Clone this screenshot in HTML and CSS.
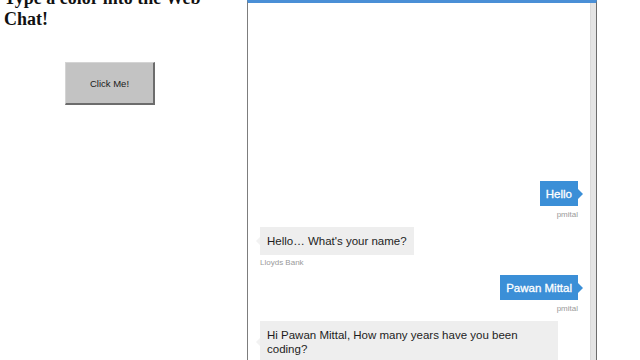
FILE: index.html
```html
<!DOCTYPE html>
<html lang="en">
<head>
    <meta charset="UTF-8">
    <meta name="viewport" content="width=device-width, initial-scale=1.0">
    <title>Web Chat Colors</title>
    <link rel="stylesheet" href="styles.css">
</head>
<body>
    <div id="wrapper">
        <div class="side">
            <h3 class="title">Type a color into the Web Chat!</h3>
            <button class="click-btn">Click Me!</button>
        </div>
        <div class="chat">
            <div class="messages">
                <div class="msg user">
                    <div class="bubble">Hello</div>
                    <p class="from">pmital</p>
                </div>
                <div class="msg bot">
                    <div class="bubble">Hello… What's your name?</div>
                    <p class="from">Lloyds Bank</p>
                </div>
                <div class="msg user">
                    <div class="bubble">Pawan Mittal</div>
                    <p class="from">pmital</p>
                </div>
                <div class="msg bot">
                    <div class="bubble">Hi Pawan Mittal, How many years have you been coding?</div>
                    <p class="from">Lloyds Bank</p>
                </div>
            </div>
            <div class="track"></div>
        </div>
    </div>
</body>
</html>
```

FILE: styles.css
```css
* {
    margin: 0;
    padding: 0;
    box-sizing: border-box;
}
body {
    background: #fff;
    overflow: hidden;
    height: 360px;
}
#wrapper {
    display: flex;
    align-items: stretch;
    height: 360px;
}
.side {
    width: 247px;
    padding-left: 4px;
    flex-shrink: 0;
}
.title {
    font-family: "Liberation Serif", "Times New Roman", serif;
    font-size: 18px;
    font-weight: bold;
    line-height: 21px;
    color: #111;
    margin-top: -12px;
    width: 220px;
}
.click-btn {
    display: block;
    width: 90px;
    height: 43px;
    margin: 32px 0 0 61px;
    background: #c3c3c3;
    border: 1px solid;
    border-color: #d4d4d4 #6c6c6c #6c6c6c #d4d4d4;
    border-width: 1px 2px 2px 1px;
    font-family: "Liberation Sans", Arial, sans-serif;
    font-size: 9.5px;
    color: #1a1a1a;
}
.chat {
    width: 350px;
    display: flex;
    border-top: 3px solid #4a8fd6;
    border-left: 1px solid #7d7d7d;
    border-right: 1px solid #6c6c6c;
}
.messages {
    flex: 1;
    display: flex;
    flex-direction: column;
    padding: 178px 12px 0 12px;
    font-family: "Liberation Sans", Arial, sans-serif;
}
.track {
    width: 6px;
    background: #e4e4e4;
    border-left: 1px solid #d9d9d9;
}
.msg {
    display: flex;
    flex-direction: column;
    margin-bottom: 7px;
}
.msg.user {
    align-items: flex-end;
}
.msg.bot {
    align-items: flex-start;
}
.bubble {
    position: relative;
    font-size: 11.5px;
    line-height: 14px;
    padding: 6px 6px;
}
.user .bubble {
    background: #3b8fd7;
    color: #fff;
    font-size: 11.5px;
    -webkit-text-stroke: 0.3px #fff;
    padding: 5.5px 6px;
}
.user .bubble::after {
    content: "";
    position: absolute;
    right: -5px;
    top: 50%;
    margin-top: -5px;
    border-left: 5px solid #3b8fd7;
    border-top: 5px solid transparent;
    border-bottom: 5px solid transparent;
}
.bot .bubble {
    background: #eeeeee;
    color: #1d1d1d;
    padding: 7px 7px;
    max-width: 298px;
}
.bot .bubble::after {
    content: "";
    position: absolute;
    left: -4px;
    top: 50%;
    margin-top: -4px;
    border-right: 4px solid #f2f2f2;
    border-top: 4px solid transparent;
    border-bottom: 4px solid transparent;
}
.from {
    font-size: 8px;
    line-height: 11px;
    color: #9a9a9a;
    margin-top: 2.5px;
}
```
